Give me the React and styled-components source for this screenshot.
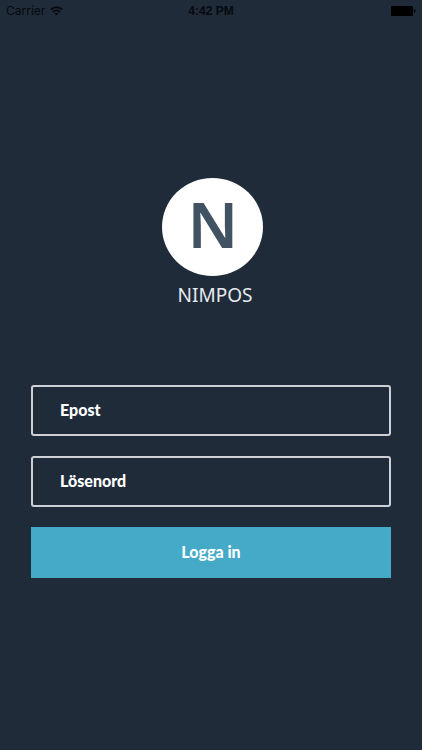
import React, { useState } from 'react'
import styled, { createGlobalStyle } from 'styled-components'

const GlobalStyle = createGlobalStyle`
  * {
    box-sizing: border-box;
  }
  body {
    margin: 0;
    background: #202b3a;
  }
`

const Page = styled.div`
  min-height: 100vh;
  background: #202b3a;
  display: flex;
  flex-direction: column;
  font-family: Lato, 'Open Sans', sans-serif;
`

const StatusBar = styled.header`
  display: grid;
  grid-template-columns: 1fr auto 1fr;
  align-items: center;
  height: 22px;
  padding: 0 6px;
  color: #06090d;
  font-family: Inter, 'Liberation Sans', sans-serif;
  font-size: 12px;
  line-height: 22px;
`

const Carrier = styled.div`
  display: flex;
  align-items: center;
  gap: 5px;
`

const Time = styled.time`
  font-family: 'Liberation Sans', Arial, sans-serif;
  font-weight: bold;
`

const BatteryIcon = styled.svg`
  justify-self: end;
`

const Main = styled.main`
  flex: 1;
  display: flex;
  flex-direction: column;
  padding: 156px 31px 40px;
`

const Brand = styled.div`
  display: flex;
  flex-direction: column;
  align-items: center;
  padding-left: 2px;
  font-family: 'Noto Sans', 'Open Sans', sans-serif;
`

const Badge = styled.div`
  width: 101px;
  height: 98px;
  padding: 0 0 6px 2px;
  border-radius: 50%;
  background: #ffffff;
  color: #415262;
  display: flex;
  align-items: center;
  justify-content: center;
  font-size: 64px;
  font-weight: 600;
  line-height: 92px;
`

const BrandName = styled.h1`
  margin: 7px 0 0;
  padding-left: 6px;
  color: #e6eaef;
  font-size: 19px;
  font-weight: 400;
  line-height: 24px;
`

const Form = styled.form`
  display: flex;
  flex-direction: column;
  gap: 20px;
  margin-top: 78px;
`

const Field = styled.input`
  width: 100%;
  height: 51px;
  padding: 0 27px 2px;
  background: transparent;
  border: 2px solid #cdd0d4;
  border-radius: 3px;
  color: #ffffff;
  font-family: inherit;
  font-size: 16px;
  font-weight: 900;

  &::placeholder {
    color: #ffffff;
    opacity: 1;
  }
  &:focus {
    outline: none;
    border-color: #45a9c8;
  }
`

const LoginButton = styled.button`
  height: 51px;
  padding: 0 0 2px;
  border: none;
  background: #45a9c8;
  color: #ffffff;
  font-family: inherit;
  font-size: 16px;
  font-weight: 900;
  cursor: pointer;
`

const App = () => {
  const [email, setEmail] = useState('')
  const [password, setPassword] = useState('')

  return (
    <Page>
      <GlobalStyle />
      <StatusBar>
        <Carrier>
          Carrier
          <svg width="13" height="10" viewBox="0 0 13 10" fill="none" stroke="currentColor" strokeWidth="1.8" aria-hidden="true">
            <path d="M0.8 3.7C4 0.4 9 0.4 12.2 3.7" />
            <path d="M2.9 6C5 4 8 4 10.1 6" />
            <path d="M6.5 9.6L4.5 7.5C5.7 6.5 7.3 6.5 8.5 7.5Z" fill="currentColor" stroke="none" />
          </svg>
        </Carrier>
        <Time>4:42 PM</Time>
        <BatteryIcon width="25" height="10" viewBox="0 0 25 10" fill="#000000" aria-hidden="true">
          <rect width="22" height="10" rx="1" />
          <path d="M23 3C25 3.5 25 6.5 23 7Z" />
        </BatteryIcon>
      </StatusBar>
      <Main>
        <Brand>
          <Badge>N</Badge>
          <BrandName>NIMPOS</BrandName>
        </Brand>
        <Form onSubmit={(e) => e.preventDefault()}>
          <Field
            type="email"
            aria-label="Epost"
            placeholder="Epost"
            value={email}
            onChange={(e) => setEmail(e.target.value)}
          />
          <Field
            type="password"
            aria-label="Lösenord"
            placeholder="Lösenord"
            value={password}
            onChange={(e) => setPassword(e.target.value)}
          />
          <LoginButton type="submit">Logga in</LoginButton>
        </Form>
      </Main>
    </Page>
  )
}

export default App
